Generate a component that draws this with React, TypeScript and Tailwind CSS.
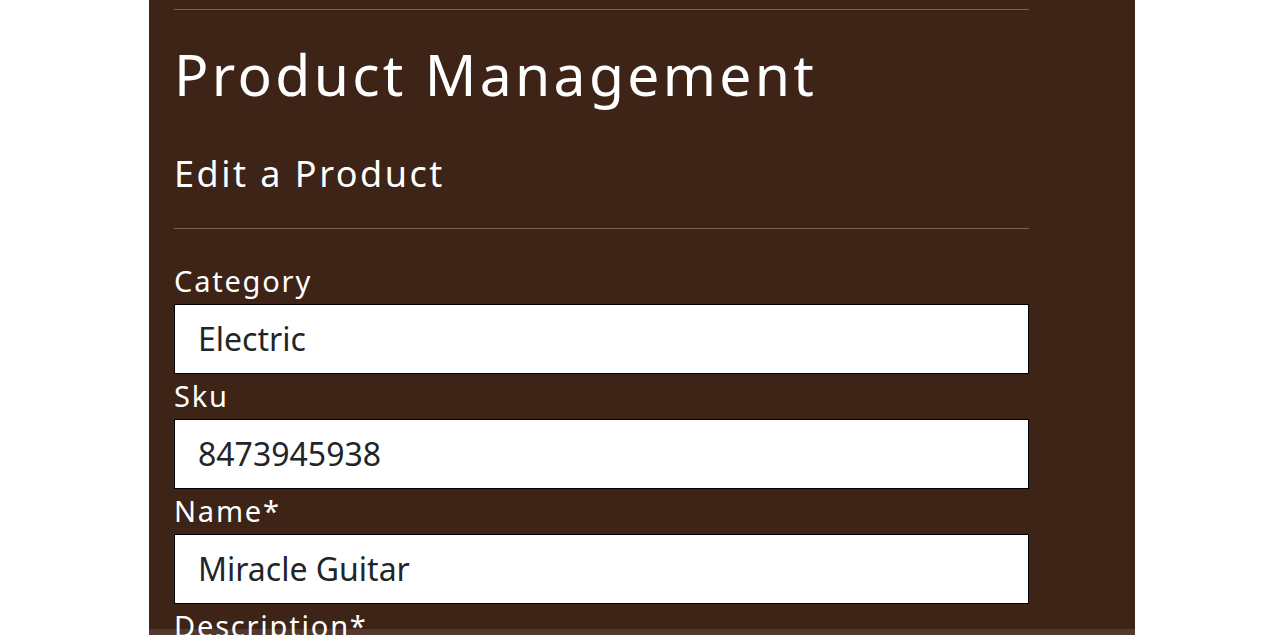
export default function App() {
  const fields = [
    { label: "Category", value: "Electric" },
    { label: "Sku", value: "8473945938" },
    { label: "Name*", value: "Miracle Guitar" },
  ];

  return (
    <div className="min-h-screen bg-white font-['Noto_Sans',sans-serif]">
      <main className="relative mx-auto w-[986px] min-h-[635px] bg-[#3e2317] px-[25px] pt-[9px]">
        <div className="w-[855px]">
          <hr className="border-0 border-t border-[#7a6053]" />
          <h1 className="mt-[24px] text-[57px] leading-[80px] tracking-[3.3px] text-white">Product Management</h1>
          <h2 className="mt-[36px] text-[36px] leading-[48px] tracking-[2.5px] text-white">Edit a Product</h2>
          <hr className="mt-[30px] border-0 border-t border-[#7a6053]" />

          <form className="mt-[30px]">
            {fields.map((f) => (
              <div key={f.label}>
                <label className="block text-[29px] leading-[45px] tracking-[1.8px] text-white -translate-y-[1px]">
                  {f.label}
                </label>
                <div className="flex h-[70px] items-center border border-black bg-white px-[23px] text-[32px] text-[#212529]">
                  {f.value}
                </div>
              </div>
            ))}
            <label className="block text-[29px] leading-[45px] tracking-[1.8px] text-white -translate-y-[1px]">
              Description*
            </label>
          </form>
        </div>
      </main>
      <div className="fixed bottom-0 left-1/2 h-[6px] w-[986px] -translate-x-1/2 bg-white/10" />
    </div>
  );
}
